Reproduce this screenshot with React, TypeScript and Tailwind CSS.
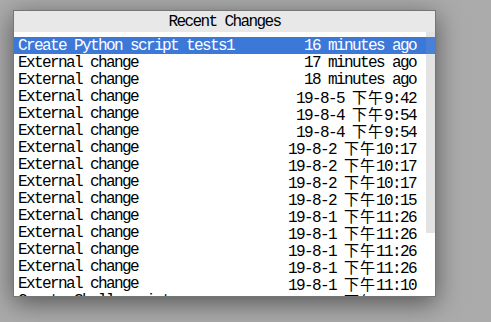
import React from "react";

type Change = { title: string; when: string };

const CHANGES: Change[] = [
  { title: "Create Python script tests1", when: "16 minutes ago" },
  { title: "External change", when: "17 minutes ago" },
  { title: "External change", when: "18 minutes ago" },
  { title: "External change", when: "19-8-5 下午9:42" },
  { title: "External change", when: "19-8-4 下午9:54" },
  { title: "External change", when: "19-8-4 下午9:54" },
  { title: "External change", when: "19-8-2 下午10:17" },
  { title: "External change", when: "19-8-2 下午10:17" },
  { title: "External change", when: "19-8-2 下午10:17" },
  { title: "External change", when: "19-8-2 下午10:15" },
  { title: "External change", when: "19-8-1 下午11:26" },
  { title: "External change", when: "19-8-1 下午11:26" },
  { title: "External change", when: "19-8-1 下午11:26" },
  { title: "External change", when: "19-8-1 下午11:26" },
  { title: "External change", when: "19-8-1 下午11:10" },
  { title: "Create Shell script", when: "19-8-1 下午11:08" },
];

// CJK glyphs are double width (16px) next to 8px ascii cells
function Mono({ text }: { text: string }) {
  const parts = text.split(/([\u4e00-\u9fff]+)/);
  return (
    <>
      {parts.map((p, i) =>
        /[\u4e00-\u9fff]/.test(p) ? (
          <span
            key={i}
            className="text-[15px] leading-[17px] tracking-[1px] [font-family:'Noto_Sans_CJK_SC','Noto_Sans_CJK_JP',sans-serif]"
          >
            {p}
          </span>
        ) : (
          <span key={i}>{p}</span>
        ),
      )}
    </>
  );
}

export default function App() {
  return (
    <div className="h-[322px] w-[491px] overflow-hidden bg-[#ababab] pl-[13px] pt-[10px]">
      <div className="relative flex h-[287px] w-[423px] flex-col overflow-hidden border border-[#767676] bg-white text-[16px] leading-[17px] tracking-[-1.6px] text-black shadow-[0_6px_24px_rgba(0,0,0,0.5)] [font-family:'Liberation_Mono','Noto_Sans_CJK_SC',monospace]">
        <div className="flex h-[21px] shrink-0 items-center justify-center bg-[#e8e8e8] pt-[1px]">
          Recent Changes
        </div>
        <div className="absolute right-0 top-[21px] h-[201px] w-[9px] bg-[#e3e3e3]" />
        <ul className="relative flex flex-col pt-[5px]">
          {CHANGES.map((c, i) => (
            <li
              key={i}
              className={`relative flex h-[17px] shrink-0 items-center justify-between pl-[4px] pr-[19px] pt-[2px] ${
                i === 0 ? "bg-[#3c78d8] text-white" : ""
              }`}
            >
              <span className="whitespace-pre">
                <Mono text={c.title} />
              </span>
              <span className="whitespace-pre">
                <Mono text={c.when} />
              </span>
              {i === 0 ? (
                <span className="absolute right-0 top-0 h-full w-[9px] bg-[#4a80d6]" />
              ) : null}
            </li>
          ))}
        </ul>
      </div>
    </div>
  );
}
